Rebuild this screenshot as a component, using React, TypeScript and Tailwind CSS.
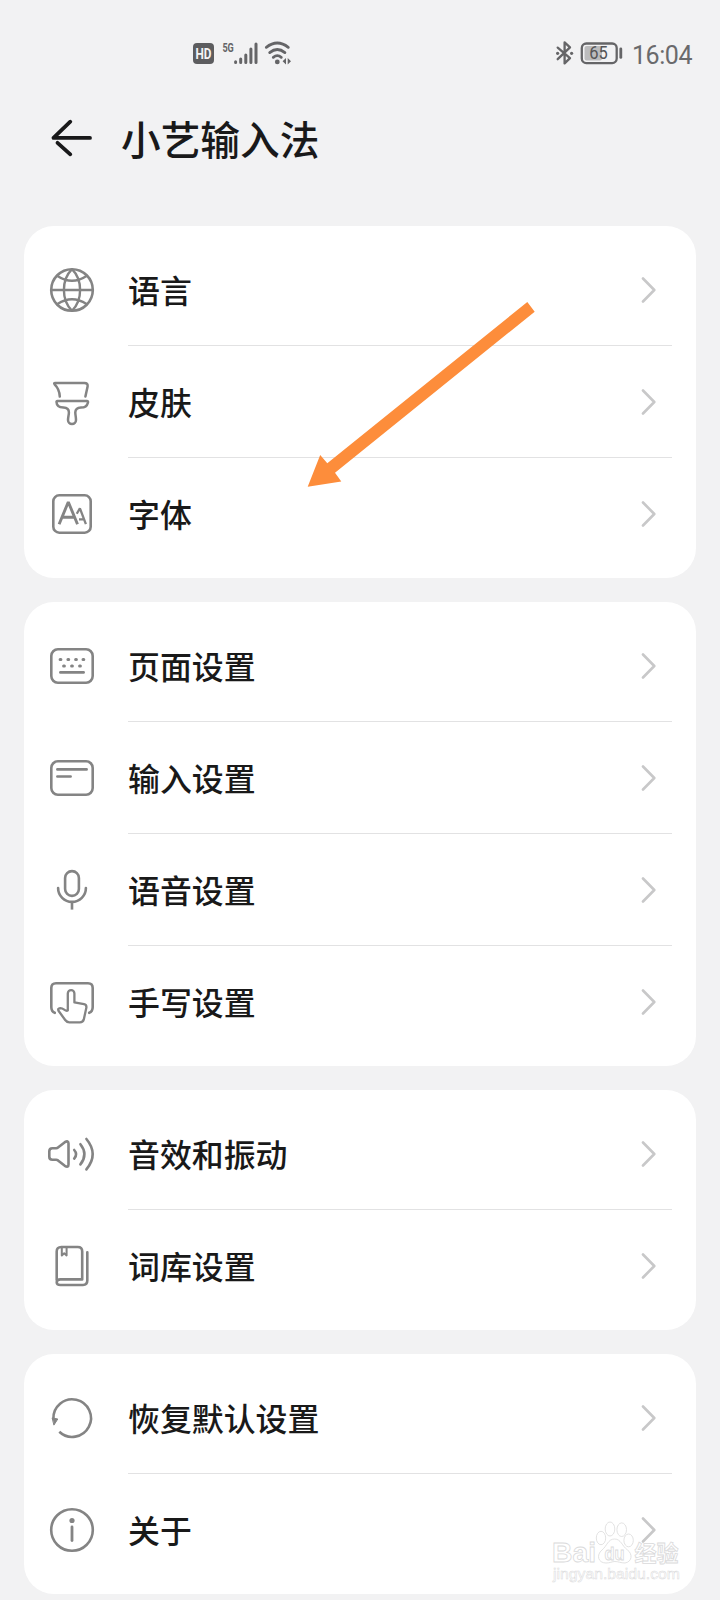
import type { ReactNode } from "react";

function Icon({ children }: { children: ReactNode }) {
  return (
    <svg
      className="size-12 shrink-0 overflow-visible"
      viewBox="0 0 48 48"
      fill="none"
      stroke="#848484"
      strokeWidth="2.6"
      strokeLinecap="round"
      strokeLinejoin="round"
    >
      {children}
    </svg>
  );
}

const globe = (
  <Icon>
    <circle cx="24" cy="24" r="20.8" />
    <path d="M3.2 24H44.8M24 3.2C13.2 14 13.2 34 24 44.8C34.8 34 34.8 14 24 3.2M9.5 10Q24 19.6 38.5 10M9.5 38Q24 28.4 38.5 38" strokeWidth="2.4" />
  </Icon>
);

const brush = (
  <Icon>
    <path d="M11.8 18.6C11.6 13.6 9.6 9.4 6.6 6.4Q5.6 4.9 7.2 4.9H36.4Q40.2 4.9 39.6 8.6L37.4 18.6" strokeWidth="2.5" />
    <path d="M9.4 22.9H38.8Q40.6 22.9 39.8 25C39 28.4 36.6 29.6 33 29.6C28.6 29.8 27.4 31.6 27.3 34.4C27.3 37 28 39 28 42A4 4 0 0 1 20 42C20 39 20.9 37 20.9 34.4C20.9 31.2 19.4 29.8 15.4 29.6C11.4 29.4 8.6 28 8.5 24Q8.4 22.9 9.4 22.9Z" strokeWidth="2.5" />
  </Icon>
);

const typeface = (
  <Icon>
    <rect x="5.3" y="5.3" width="37.4" height="37.4" rx="6" />
    <g strokeLinecap="butt" strokeLinejoin="miter" strokeMiterlimit="1">
      <path d="M11.1 34.2L20.3 12L29.5 34.2M14 27.3H26.6" strokeWidth="2.9" />
      <path d="M28.8 23.8L31.9 18.3L37.9 34.2M31 29.4H36" strokeWidth="2.3" />
    </g>
  </Icon>
);

const keyboard = (
  <Icon>
    <rect x="3.3" y="7.3" width="41.4" height="33.4" rx="6.6" />
    <path d="M12.1 17.4H12.9M19.9 17.4H20.7M27.6 17.4H28.4M35 17.4H35.8M15.6 24H16.4M23.6 24H24.4M31.6 24H32.4" strokeWidth="3" />
    <path d="M12.4 30.4H35.6" strokeWidth="2.7" />
  </Icon>
);

const inputBox = (
  <Icon>
    <rect x="3.3" y="7.3" width="41.4" height="33.4" rx="6.6" />
    <path d="M9.4 15.4H38.6M9.4 22.5H22.6" strokeWidth="2.7" />
  </Icon>
);

const mic = (
  <Icon>
    <rect x="17.1" y="5.1" width="13.8" height="24.8" rx="6.9" />
    <path d="M10.1 22A13.9 13.9 0 0 0 37.9 22" />
    <path d="M24 36V43.6" strokeLinecap="butt" />
  </Icon>
);

const hand = (
  <Icon>
    <path d="M6.8 34.8Q3.3 33.4 3.3 29V10Q3.3 5.3 8 5.3H40Q44.7 5.3 44.7 10V29Q44.7 33.4 41.2 34.8" />
    <path d="M19.8 32.4V15.4A3.3 3.3 0 0 1 26.4 15.4V24.4L36 26.2Q38.7 26.8 38.4 29.6L35.8 41.4Q35 44.3 32 44.3H21.4Q18.8 44.3 17.2 42L10.5 32.8Q9.4 30.4 12.2 30.2Q14.2 30.2 16.2 31.6Q18.6 33.4 19.8 32.4Z" strokeWidth="2.3" />
  </Icon>
);

const speaker = (
  <Icon>
    <path d="M8.2 18.3Q9.2 18.3 10 17.6L16.8 12.2Q20.5 10 20.5 13.6V34.4Q20.5 38 16.8 35.8L10 30.4Q9.2 29.8 8.2 29.8H4.4Q1.3 29.8 1.3 26.8V21.3Q1.3 18.3 4.4 18.3Z" />
    <path d="M26.2 20Q30 24.2 26.2 28.6M32.4 14.2Q40.4 24.2 32.4 34.4M38.4 9Q51 24.2 38.4 39.4" />
  </Icon>
);

const book = (
  <Icon>
    <path d="M8.7 38V9.6Q8.7 5 13.3 5H29.8Q34.2 5 34.2 9.6V37.4H12.4Q8.7 37.4 8.7 40.2Q8.7 43 12.4 43H35Q39.3 43 39.3 38.6V10.2" />
    <path d="M13.8 5.4V13.4L16.2 11.2L18.6 13.4V5.4" strokeWidth="2" />
  </Icon>
);

const restore = (
  <Icon>
    <path d="M5.4 25A18.8 18.8 0 1 1 11.3 37.8" strokeLinecap="butt" />
    <path d="M4.5 24L9.8 25L6.1 30.8Z" fill="#848484" strokeWidth="1" />
  </Icon>
);

const info = (
  <Icon>
    <circle cx="24" cy="24" r="20.8" />
    <circle cx="24" cy="14.5" r="2.6" fill="#848484" stroke="none" />
    <path d="M24 20.9V34.6" strokeWidth="2.8" />
  </Icon>
);

const groups: { icon: ReactNode; label: string }[][] = [
  [
    { icon: globe, label: "语言" },
    { icon: brush, label: "皮肤" },
    { icon: typeface, label: "字体" },
  ],
  [
    { icon: keyboard, label: "页面设置" },
    { icon: inputBox, label: "输入设置" },
    { icon: mic, label: "语音设置" },
    { icon: hand, label: "手写设置" },
  ],
  [
    { icon: speaker, label: "音效和振动" },
    { icon: book, label: "词库设置" },
  ],
  [
    { icon: restore, label: "恢复默认设置" },
    { icon: info, label: "关于" },
  ],
];

function Row({ icon, label, last }: { icon: ReactNode; label: string; last: boolean }) {
  return (
    <li className="flex h-28 items-center gap-8 pr-6 pl-6">
      {icon}
      <div
        className={
          last
            ? "flex h-full flex-1 items-center justify-between border-b border-transparent pr-4"
            : "flex h-full flex-1 items-center justify-between border-b border-[#e2e2e3] pr-4"
        }
      >
        <span className="pb-0.5 text-[31.9px] leading-8 font-medium text-[#191919]">{label}</span>
        <svg className="h-7 w-4" viewBox="0 0 16 28" fill="none" stroke="#c8c8c9" strokeWidth="2.6" strokeLinecap="round" strokeLinejoin="round">
          <path d="M3 2.5L14.3 14L3 25.5" />
        </svg>
      </div>
    </li>
  );
}

function StatusBar() {
  return (
    <div className="flex h-[104px] items-start justify-between pt-10 pr-7 pl-[192px] text-[#656567]">
      <svg className="h-[28px] w-[102px] overflow-visible" viewBox="192 40 102 28" fill="none" stroke="#656567" strokeLinecap="round">
        <rect x="193" y="43" width="21" height="21" rx="4" fill="#5d5d5f" stroke="none" />
        <text x="203.5" y="58.8" textAnchor="middle" textLength="16" lengthAdjust="spacingAndGlyphs" fontFamily="Roboto" fontSize="14.5" fontWeight="700" fill="#f5f5f5" stroke="none">HD</text>
        <text x="222.4" y="51.8" textLength="11.4" lengthAdjust="spacingAndGlyphs" fontFamily="Roboto" fontSize="12.5" fontWeight="700" fill="#656567" stroke="none">5G</text>
        <path d="M235.6 61.8V62.4M240.7 59V62.4M245.8 55V62.4M250.9 49V62.4M256 44V62.4" strokeWidth="3" />
        <path d="M266.3 47.3Q277.3 38.8 288.3 47.3M269.7 52.6Q277.3 46.4 284.9 52.6M273.3 57.3Q277.3 54 281.3 57.3" strokeWidth="2.8" />
        <circle cx="277.3" cy="61.9" r="2.4" fill="#656567" stroke="none" />
        <path d="M282.6 61.2L286 58V64.4ZM291 61.2L287.7 58V64.4Z" fill="#656567" stroke="none" />
      </svg>
      <div className="flex h-7 items-center">
        <svg className="h-7 w-[70px]" viewBox="556 40 70 28" fill="none" stroke="#656567" strokeWidth="2.3" strokeLinecap="round" strokeLinejoin="round">
          <path d="M558.7 47.6L571 58.2L565.6 63.4V42.4L571 47.4L558.7 59.2" />
          <circle cx="558.6" cy="53.3" r="1.6" fill="#656567" stroke="none" />
          <circle cx="572.6" cy="53.3" r="1.6" fill="#656567" stroke="none" />
          <rect x="582.8" y="43.5" width="34.9" height="19.6" rx="4.5" />
          <rect x="585.5" y="46" width="17.5" height="14.6" rx="2" fill="#bcbcbd" stroke="none" />
          <path d="M621.8 48.8V57.4" strokeWidth="2.8" />
          <text x="599.4" y="59.4" textAnchor="middle" textLength="18.5" lengthAdjust="spacingAndGlyphs" fontFamily="Roboto" fontSize="17.5" fill="#555557" stroke="none">65</text>
        </svg>
        <svg className="ml-[7px] h-7 w-[60px] overflow-visible" viewBox="0 0 60 28">
          <text x="0" y="24.2" textLength="60.5" lengthAdjust="spacing" fontFamily="Roboto" fontSize="25" fill="#6a6a6c">16:04</text>
        </svg>
      </div>
    </div>
  );
}

function Watermark() {
  return (
    <svg
      className="absolute top-[1518px] left-[548px] h-[70px] w-[136px]"
      viewBox="548 1518 136 70"
      fill="#fff"
      stroke="#dadadb"
      strokeWidth="0.8"
    >
      <g fontFamily="'Liberation Sans', 'Noto Sans CJK SC', sans-serif" fontWeight="700">
        <text x="552" y="1561.5" fontSize="28" textLength="44" lengthAdjust="spacingAndGlyphs">Bai</text>
        <path d="M614.5 1539C608 1539 607 1546 602 1550C596 1555 598 1563 606 1563C610 1563 612 1561.5 615 1561.5C618 1561.5 621 1563 625 1563C632 1562 633 1554 627.5 1550C622 1546 621 1539 614.5 1539Z" />
        <ellipse cx="601" cy="1538" rx="4.7" ry="6.7" />
        <ellipse cx="610" cy="1529" rx="4.8" ry="7" />
        <ellipse cx="621.7" cy="1529.7" rx="4.8" ry="6.8" />
        <ellipse cx="628.6" cy="1540.4" rx="4.7" ry="6.4" />
        <text x="604.5" y="1559.5" fontSize="18" textLength="20" lengthAdjust="spacingAndGlyphs">du</text>
        <text x="634.5" y="1560.5" fontSize="22" textLength="44" lengthAdjust="spacingAndGlyphs" fillOpacity="0.8">经验</text>
        <text x="553" y="1579" fontSize="15.5" fontWeight="400" strokeWidth="0.5" textLength="127" lengthAdjust="spacingAndGlyphs">jingyan.baidu.com</text>
      </g>
    </svg>
  );
}

export default function App() {
  return (
    <main
      lang="zh-CN"
      className="relative flex h-[1600px] w-[720px] flex-col overflow-hidden bg-[#f2f2f3] font-['Noto_Sans_CJK_SC',sans-serif]"
    >
      <StatusBar />
      <header className="flex h-[122px] items-start gap-[27px] pt-2.5 pl-[50px]">
        <svg className="h-12 w-11" viewBox="50 114 44 48" fill="none" stroke="#19191a" strokeWidth="3.8" strokeLinecap="round" strokeLinejoin="round">
          <path d="M90 137.9H53.5L70.3 121.7M57.5 142.8L70.3 154.3" />
        </svg>
        <h1 className="text-[39.7px] leading-[48px] font-medium text-[#19191a]">小艺输入法</h1>
      </header>
      <div className="flex flex-col gap-6 pr-6 pl-6">
        {groups.map((rows) => (
          <ul key={rows[0].label} className="rounded-[30px] bg-white py-2">
            {rows.map((row, index) => (
              <Row key={row.label} icon={row.icon} label={row.label} last={index === rows.length - 1} />
            ))}
          </ul>
        ))}
      </div>
      <svg className="absolute top-[300px] left-[306px] h-[190px] w-[231px]" viewBox="306 300 231 190" fill="#fd8d3b">
        <path d="M527.3 302L534.7 311.7L335 472.7L341.3 481.5L307.7 486.7L320.2 455L327.3 463.3Z" />
      </svg>
      <Watermark />
    </main>
  );
}
